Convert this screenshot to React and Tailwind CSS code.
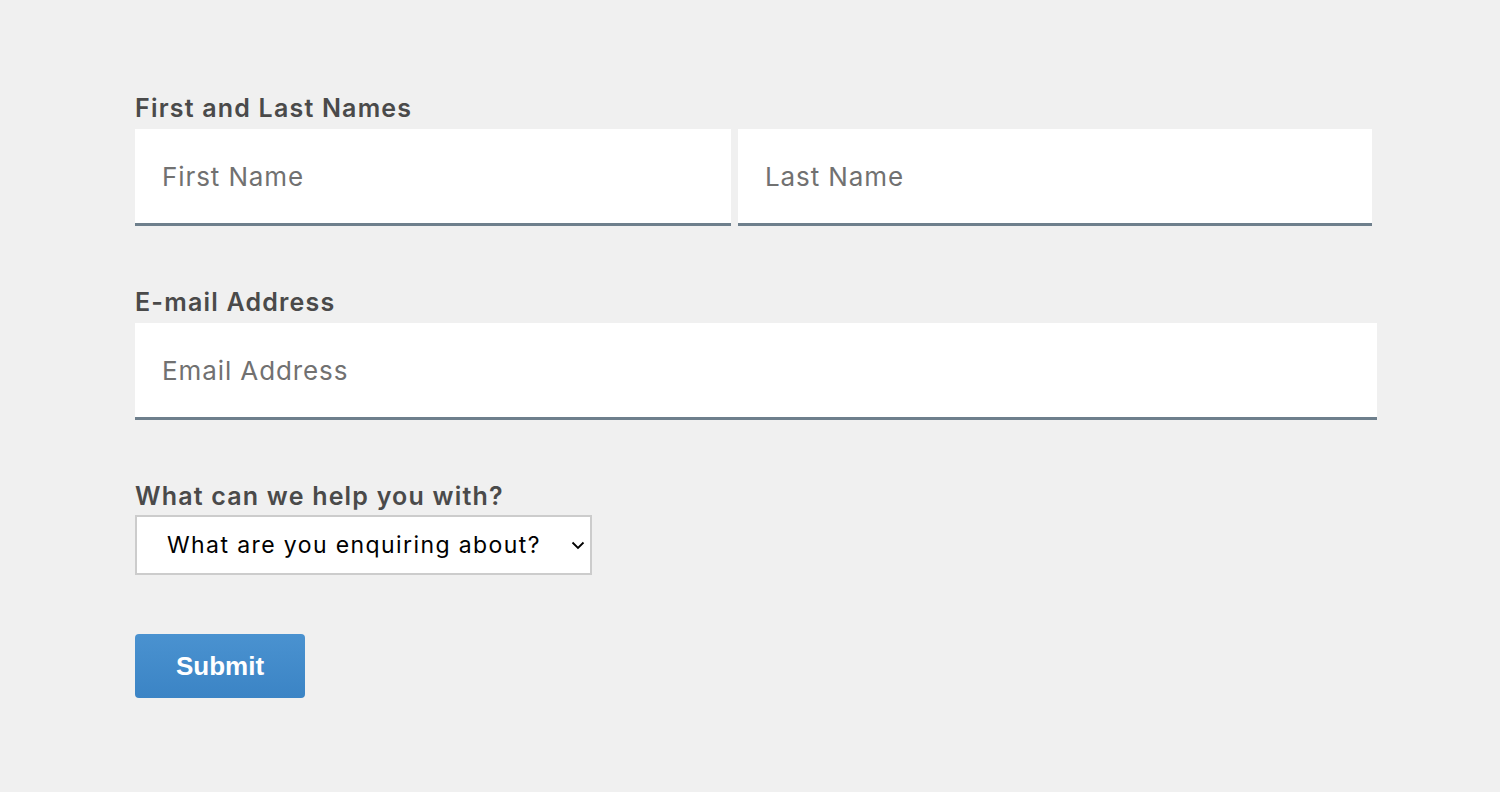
export default function App() {
  return (
    <div className="min-h-screen w-full bg-[#f0f0f0] pl-[135px] pt-[93px]" style={{ fontFamily: "Inter, 'Open Sans', sans-serif" }}>
      <form className="flex flex-col">
        {/* names */}
        <label className="text-[25px] leading-[30px] font-semibold text-[#4a4a4a] tracking-[1.2px]">First and Last Names</label>
        <div className="mt-[6px] flex gap-[7px]">
          <input
            placeholder="First Name"
            className="h-[97px] w-[596px] bg-white border-b-[3px] border-[#6e7f8c] px-[27px] text-[26px] tracking-[0.9px] text-[#555] placeholder:text-[#717171] outline-none"
          />
          <input
            placeholder="Last Name"
            className="h-[97px] w-[634px] bg-white border-b-[3px] border-[#6e7f8c] px-[27px] text-[26px] tracking-[0.9px] text-[#555] placeholder:text-[#717171] outline-none"
          />
        </div>

        {/* email */}
        <label className="mt-[61px] text-[25px] leading-[30px] font-semibold text-[#4a4a4a] tracking-[1.2px]">E-mail Address</label>
        <input
          placeholder="Email Address"
          className="mt-[6px] h-[97px] w-[1242px] bg-white border-b-[3px] border-[#6e7f8c] px-[27px] text-[26px] tracking-[0.9px] text-[#555] placeholder:text-[#717171] outline-none"
        />

        {/* enquiry */}
        <label className="mt-[61px] text-[25px] leading-[30px] font-semibold text-[#4a4a4a] tracking-[1.2px]">What can we help you with?</label>
        <div className="relative mt-[4px] w-[457px]">
          <select className="block h-[60px] w-[457px] appearance-none bg-white border-2 border-[#cccccc] pl-[30px] pr-[30px] text-[23px] tracking-[1.4px] text-black outline-none">
            <option>What are you enquiring about?</option>
            <option>General question</option>
            <option>Support</option>
          </select>
          <svg className="pointer-events-none absolute left-[436px] top-[26px] h-[9px] w-[14px]" viewBox="0 0 14 9" fill="none">
            <path d="M1.5 1.5 L7 7 L12.5 1.5" stroke="#000" strokeWidth="1.8" />
          </svg>
        </div>

        <div className="mt-[59px]">
          <button
            type="button"
            className="h-[64px] w-[170px] rounded-[4px] bg-gradient-to-b from-[#4a92d0] to-[#3b84c5] text-white text-[26px] font-bold"
            style={{ fontFamily: "'Liberation Sans', Arial, sans-serif" }}
          >
            Submit
          </button>
        </div>
      </form>
    </div>
  );
}
